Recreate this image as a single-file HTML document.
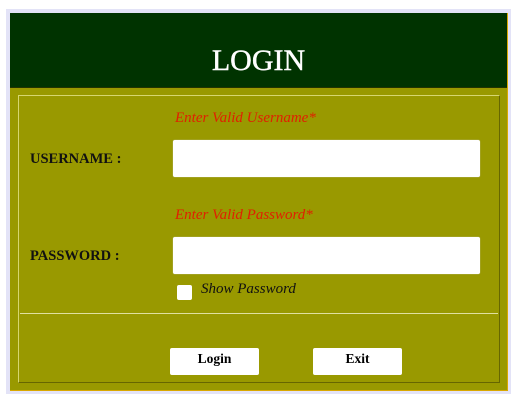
<!DOCTYPE html>
<html><head><style>
body{margin:0;width:529px;height:404px;background:#fff;position:relative;overflow:hidden;font-family:"Liberation Serif",serif}
.bg{position:absolute;left:6px;top:9px;width:505px;height:385px;background:#e3e3f7}
.box{position:absolute;left:10px;top:13px;width:497px;height:377px;background:#999900;border-right:1px solid #d9a800;border-bottom:1px solid #d9a800}
.hdr{position:absolute;left:10px;top:13px;width:497px;height:74px;background:#003300;border-bottom:1px solid #223300}
.hdr span{position:absolute;left:0;right:0;top:33px;text-align:center;color:#fff;font-size:30px;line-height:30px;-webkit-text-stroke:0.4px #fff}
.inner{position:absolute;left:18px;top:95px;width:480px;height:286px;border:1px solid #d6d670;border-right-color:#666600;border-bottom-color:#666600}
.hr{position:absolute;left:20px;top:313px;width:478px;height:1px;background:#e0e0a0}
.err{position:absolute;left:175px;color:#e02000;font-style:italic;font-size:15px}
.lbl{position:absolute;left:30px;font-weight:bold;font-size:14.5px;color:#111}
.inp{position:absolute;left:173px;width:307px;height:37px;background:#fff;border-radius:2px;box-shadow:0 0 1px #ccc}
.cb{position:absolute;left:177px;top:285px;width:15px;height:15px;background:#fff;border-radius:2px}
.sp{position:absolute;left:201px;top:281px;font-style:italic;font-size:15px;color:#111}
.btn{position:absolute;top:348px;width:89px;height:27px;background:#fff;border-radius:2px;text-align:center;font-weight:bold;font-size:13.5px;line-height:22px;color:#000}
</style></head><body>
<div class="bg"></div><div class="box"></div>
<div class="hdr"><span>LOGIN</span></div>
<div class="inner"></div>
<div class="err" style="top:110px">Enter Valid Username*</div>
<div class="lbl" style="top:151px">USERNAME :</div>
<div class="inp" style="top:140px"></div>
<div class="err" style="top:207px">Enter Valid Password*</div>
<div class="lbl" style="top:248px">PASSWORD :</div>
<div class="inp" style="top:237px"></div>
<div class="cb"></div><div class="sp">Show Password</div>
<div class="hr"></div>
<div class="btn" style="left:170px">Login</div>
<div class="btn" style="left:313px">Exit</div>
</body></html>
